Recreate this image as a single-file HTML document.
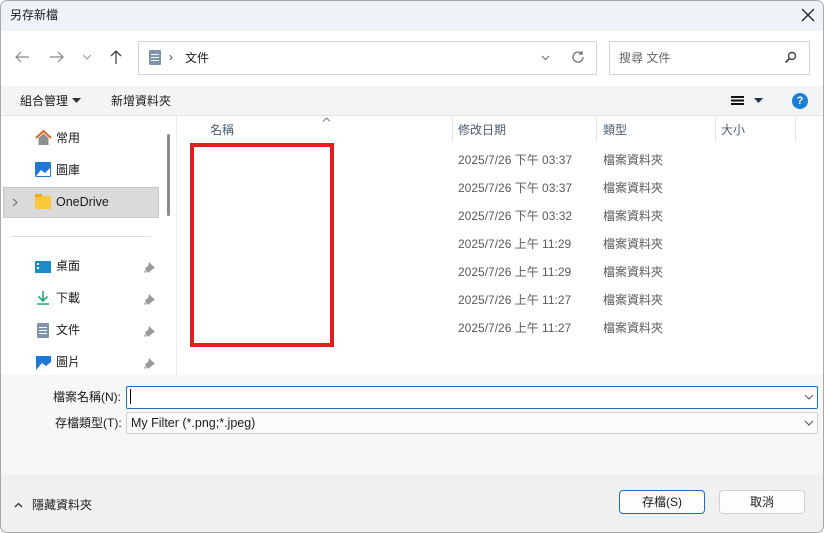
<!DOCTYPE html>
<html><head><meta charset="utf-8"><style>
*{margin:0;padding:0;box-sizing:border-box}
body{width:824px;height:533px;overflow:hidden;font-family:"Liberation Sans","Noto Sans CJK TC",sans-serif;font-size:12px;color:#1a1a1a;background:#fff;position:relative}
.a{position:absolute}
.win{position:absolute;left:0;top:0;width:824px;height:533px;border-radius:7px;overflow:hidden;background:#fff}
.frame{position:absolute;left:0;top:0;width:824px;height:533px;border:1px solid #a8a8a8;border-radius:7px;pointer-events:none}
.t{position:absolute;white-space:nowrap;line-height:14px}
.row .t{color:#5a5a5a}
</style></head><body>
<div class="win">
<div class="a" style="left:0;top:0;width:824px;height:31px;background:#eef3f8"></div>
<div class="t" style="left:10px;top:8px;font-size:12px">另存新檔</div>
<svg class="a" style="left:801px;top:8px" width="14" height="14"><path d="M1 1L13 13M13 1L1 13" stroke="#222" stroke-width="1.3"/></svg>
<svg class="a" style="left:14px;top:50px" width="16" height="14"><path d="M15 7H2M7 2L2 7L7 12" stroke="#888" stroke-width="1.2" fill="none"/></svg>
<svg class="a" style="left:49px;top:50px" width="16" height="14"><path d="M1 7H14M9 2L14 7L9 12" stroke="#888" stroke-width="1.2" fill="none"/></svg>
<svg class="a" style="left:82px;top:54px" width="10" height="6"><path d="M1 1L5 5L9 1" stroke="#999" stroke-width="1" fill="none"/></svg>
<svg class="a" style="left:109px;top:49px" width="14" height="16"><path d="M7 15V2M2 7L7 2L12 7" stroke="#444" stroke-width="1.3" fill="none"/></svg>
<div class="a" style="left:138px;top:41px;width:459px;height:34px;border:1px solid #d6d6d6"></div>
<div class="a" style="left:149px;top:50px;width:12px;height:15px;background:#7f93ad;border-radius:1px"></div>
<div class="a" style="left:151px;top:54px;width:8px;height:1px;background:#fff;box-shadow:0 3px #fff,0 6px #fff"></div>
<div class="t" style="left:169px;top:50px;color:#444">›</div>
<div class="t" style="left:185px;top:51px">文件</div>
<svg class="a" style="left:541px;top:55px" width="9" height="6"><path d="M1 1L4.5 4.5L8 1" stroke="#666" fill="none"/></svg>
<svg class="a" style="left:571px;top:50px" width="14" height="14"><path d="M12 7A5 5 0 1 1 10.5 3.5M11 1V4H8" stroke="#666" stroke-width="1.2" fill="none"/></svg>
<div class="a" style="left:609px;top:41px;width:201px;height:34px;border:1px solid #d6d6d6"></div>
<div class="t" style="left:619px;top:51px;color:#666">搜尋 文件</div>
<svg class="a" style="left:784px;top:51px" width="13" height="13"><circle cx="8" cy="5" r="3.5" stroke="#444" stroke-width="1.4" fill="none"/><path d="M5.5 7.5L1.5 11.5" stroke="#444" stroke-width="1.8"/></svg>
<div class="a" style="left:0;top:86px;width:824px;height:30px;background:#f3f4f6;border-bottom:1px solid #e4e4e4"></div>
<div class="t" style="left:20px;top:94px">組合管理</div>
<svg class="a" style="left:72px;top:98px" width="9" height="5"><path d="M0 0H9L4.5 5Z" fill="#333"/></svg>
<div class="t" style="left:111px;top:94px">新增資料夾</div>
<div class="a" style="left:731px;top:96px;width:13px;height:1.5px;background:#111;box-shadow:0 3.5px #111,0 7px #111"></div>
<svg class="a" style="left:754px;top:98px" width="9" height="5"><path d="M0 0H9L4.5 5Z" fill="#1d3050"/></svg>
<div class="a" style="left:792px;top:93px;width:16px;height:16px;border-radius:50%;background:#1a7fd6;color:#fff;font-weight:bold;font-size:11px;text-align:center;line-height:16px">?</div>
<div class="a" style="left:167px;top:134px;width:3px;height:82px;background:#8a8a8a;border-radius:2px"></div>
<div class="a" style="left:176px;top:116px;width:1px;height:259px;background:#ececec"></div>
<svg class="a" style="left:35px;top:130px" width="17" height="16"><path d="M1 8L8.5 1L16 8" stroke="#d8691e" stroke-width="2" fill="none"/><path d="M3.5 8V15H13.5V8L8.5 3.5Z" fill="#8d8d8d"/></svg>
<div class="t" style="left:56px;top:131px">常用</div>
<div class="a" style="left:35px;top:162px;width:16px;height:15px;background:#1e7ad6;border-radius:1px"></div>
<svg class="a" style="left:36px;top:166px" width="14" height="10"><path d="M0 10L5 4L9 7L14 2V10Z" fill="#fff"/></svg>
<div class="t" style="left:56px;top:163px">圖庫</div>
<div class="a" style="left:3px;top:187px;width:156px;height:31px;background:#dadada;border:1px solid #c8c8c8"></div>
<svg class="a" style="left:12px;top:198px" width="6" height="9"><path d="M1 1L5 4.5L1 8" stroke="#666" fill="none"/></svg>
<div class="a" style="left:35px;top:196px;width:16px;height:13px;background:#f9c73a;border-radius:1px"></div>
<div class="a" style="left:35px;top:194px;width:7px;height:3px;background:#e9ab18"></div>
<div class="t" style="left:56px;top:195px;font-size:12.5px">OneDrive</div>
<div class="a" style="left:12px;top:236px;width:139px;height:1px;background:#ddd"></div>
<div class="a" style="left:35px;top:261px;width:16px;height:12px;background:#1c8bc9"></div>
<div class="a" style="left:37px;top:263px;width:2px;height:2px;background:#fff;box-shadow:0 4px #fff"></div>
<div class="t" style="left:56px;top:259px">桌面</div>
<svg class="a" style="left:36px;top:290px" width="14" height="15"><path d="M7 1V11M2.5 6.5L7 11L11.5 6.5M1 14H13" stroke="#22a67a" stroke-width="1.6" fill="none"/></svg>
<div class="t" style="left:56px;top:291px">下載</div>
<div class="a" style="left:37px;top:323px;width:12px;height:15px;background:#7f93ad;border-radius:1px"></div>
<div class="a" style="left:39px;top:327px;width:8px;height:1px;background:#fff;box-shadow:0 3px #fff,0 6px #fff"></div>
<div class="t" style="left:56px;top:323px">文件</div>
<div class="a" style="left:36px;top:356px;width:15px;height:14px;background:#1e7ad6"></div>
<svg class="a" style="left:36px;top:359px" width="15" height="11"><path d="M0 11L6 4L10 7L15 3V11Z" fill="#fff"/></svg>
<div class="t" style="left:56px;top:355px">圖片</div>
<svg class="a" style="left:144px;top:262px" width="12" height="110"><g fill="#9a9a9a"><path d="M5 0L11 6L9 7L4 11L3 9L1 11L0 10L2 8L1 6L4 4Z"/><path transform="translate(0,32)" d="M5 0L11 6L9 7L4 11L3 9L1 11L0 10L2 8L1 6L4 4Z"/><path transform="translate(0,64)" d="M5 0L11 6L9 7L4 11L3 9L1 11L0 10L2 8L1 6L4 4Z"/><path transform="translate(0,96)" d="M5 0L11 6L9 7L4 11L3 9L1 11L0 10L2 8L1 6L4 4Z"/></g></svg>
<svg class="a" style="left:322px;top:117px" width="9" height="5"><path d="M1 4.5L4.5 1L8 4.5" stroke="#777" fill="none"/></svg>
<div class="t" style="left:210px;top:123px;color:#4c5b6e">名稱</div>
<div class="t" style="left:458px;top:123px;color:#4c5b6e">修改日期</div>
<div class="t" style="left:603px;top:123px;color:#4c5b6e">類型</div>
<div class="t" style="left:721px;top:123px;color:#4c5b6e">大小</div>
<div class="a" style="left:452px;top:117px;width:1px;height:25px;background:#e5e5e5"></div>
<div class="a" style="left:596px;top:117px;width:1px;height:25px;background:#e5e5e5"></div>
<div class="a" style="left:715px;top:117px;width:1px;height:25px;background:#e5e5e5"></div>
<div class="a" style="left:795px;top:117px;width:1px;height:25px;background:#e5e5e5"></div>
<div class="row">
<div class="t" style="left:458px;top:153px">2025/7/26 下午 03:37</div><div class="t" style="left:603px;top:153px">檔案資料夾</div>
<div class="t" style="left:458px;top:181px">2025/7/26 下午 03:37</div><div class="t" style="left:603px;top:181px">檔案資料夾</div>
<div class="t" style="left:458px;top:209px">2025/7/26 下午 03:32</div><div class="t" style="left:603px;top:209px">檔案資料夾</div>
<div class="t" style="left:458px;top:237px">2025/7/26 上午 11:29</div><div class="t" style="left:603px;top:237px">檔案資料夾</div>
<div class="t" style="left:458px;top:265px">2025/7/26 上午 11:29</div><div class="t" style="left:603px;top:265px">檔案資料夾</div>
<div class="t" style="left:458px;top:293px">2025/7/26 上午 11:27</div><div class="t" style="left:603px;top:293px">檔案資料夾</div>
<div class="t" style="left:458px;top:321px">2025/7/26 上午 11:27</div><div class="t" style="left:603px;top:321px">檔案資料夾</div>
</div>
<div class="a" style="left:190px;top:143px;width:144px;height:204px;border:4px solid #e41e1e"></div>
<div class="a" style="left:0;top:375px;width:824px;height:100px;background:#f7f7f7"></div>
<div class="t" style="left:53px;top:390px">檔案名稱(N):</div>
<div class="a" style="left:126px;top:386px;width:692px;height:23px;border:1px solid #1a6fc9;border-radius:2px;background:#fff"></div>
<div class="a" style="left:130px;top:389px;width:1px;height:15px;background:#000"></div>
<svg class="a" style="left:804px;top:394px" width="10" height="6"><path d="M1 1L5 5L9 1" stroke="#555" fill="none"/></svg>
<div class="t" style="left:55px;top:416px">存檔類型(T):</div>
<div class="a" style="left:126px;top:412px;width:692px;height:22px;border:1px solid #d0d0d0;border-radius:2px;background:#fbfbfb"></div>
<div class="t" style="left:131px;top:416px;font-size:12.5px">My Filter (*.png;*.jpeg)</div>
<svg class="a" style="left:804px;top:420px" width="10" height="6"><path d="M1 1L5 5L9 1" stroke="#555" fill="none"/></svg>
<div class="a" style="left:0;top:475px;width:824px;height:58px;background:#f0f0f0"></div>
<svg class="a" style="left:14px;top:502px" width="9" height="6"><path d="M1 5L4.5 1.5L8 5" stroke="#333" stroke-width="1.3" fill="none"/></svg>
<div class="t" style="left:32px;top:498px">隱藏資料夾</div>
<div class="a" style="left:619px;top:490px;width:86px;height:24px;border:1px solid #1a6fc9;border-radius:4px;background:#fdfdfd;text-align:center;line-height:22px">存檔(S)</div>
<div class="a" style="left:719px;top:490px;width:86px;height:24px;border:1px solid #d0d0d0;border-radius:4px;background:#fdfdfd;text-align:center;line-height:22px">取消</div>
</div>
<div class="frame"></div>
</body></html>
